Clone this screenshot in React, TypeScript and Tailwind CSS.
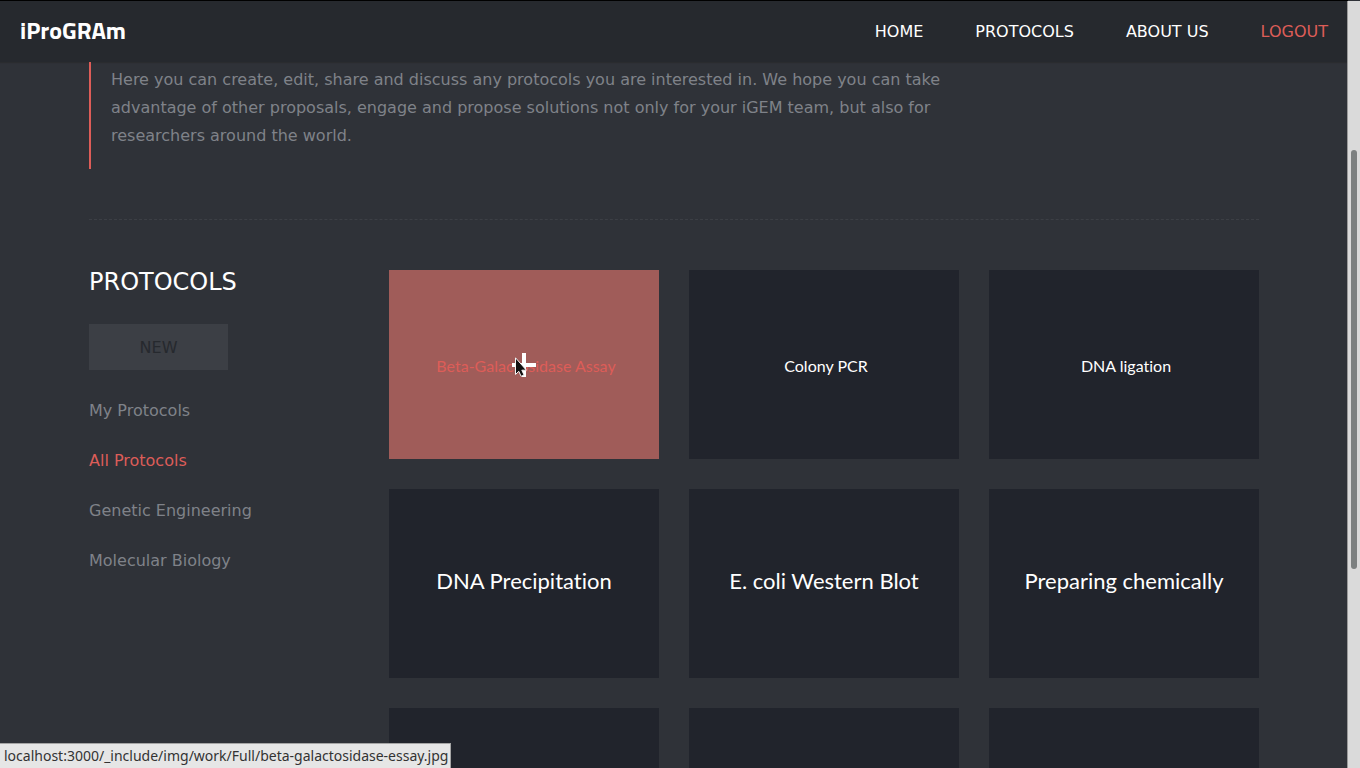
const navItems = ["Home", "Protocols", "About us"];

const filters = ["My Protocols", "All Protocols", "Genetic Engineering", "Molecular Biology"];

const protocols = [
  { title: "Beta-Galactosidase Assay", size: "small", active: true },
  { title: "Colony PCR", size: "small" },
  { title: "DNA ligation", size: "small" },
  { title: "DNA Precipitation", size: "large" },
  { title: "E. coli Western Blot", size: "large" },
  { title: "Preparing chemically", size: "large" },
  { title: "", size: "small" },
  { title: "", size: "small" },
  { title: "", size: "small" },
];

function Header() {
  return (
    <header className="flex h-[62px] shrink-0 items-center justify-between border-t border-black bg-[#26292e] px-5 shadow-[0_1px_1px_rgba(40,40,42,0.6)]">
      <a href="#home" className="pb-1 font-['Titillium_Web','Noto_Sans',sans-serif] text-2xl font-bold leading-7 text-white">
        iProGRAm
      </a>
      <nav className="flex gap-[52px] text-base uppercase">
        {navItems.map((item) => (
          <a key={item} href="#nav" className="text-white">
            {item}
          </a>
        ))}
        <a href="#logout" className="text-[#dd5d58]">
          Logout
        </a>
      </nav>
    </header>
  );
}

function Pointer() {
  return (
    <svg className="absolute left-[126px] top-[87px] h-5 w-3" viewBox="0 0 12 20" aria-hidden="true">
      <path d="M0.5 0.8v16.7l3.3-3.2 2.3 5 3-1.3-2.3-4.8h4.6z" fill="#111" stroke="#f4f4f4" strokeWidth="1" />
    </svg>
  );
}

function Tile({ title, size, active }: { title: string; size: string; active?: boolean }) {
  return (
    <a
      href="#protocol"
      aria-label={title || "Protocol"}
      className={`relative flex h-[189px] items-center justify-center font-['Lato',sans-serif] [font-variant-ligatures:none] ${
        active ? "bg-[#a05c59] text-[#dd5d58]" : "bg-[#21242c] text-white"
      } ${size === "large" ? "pb-1.5 text-[22px]" : "pl-1 pt-0.5 text-base"}`}
    >
      {title}
      {active && (
        <>
          <svg className="absolute left-[123px] top-[83px] size-6" viewBox="0 0 24 24" aria-hidden="true">
            <path d="M10 0h4v10h10v4H14v10h-4V14H0v-4h10z" fill="#fff" />
          </svg>
          <Pointer />
        </>
      )}
    </a>
  );
}

function Scrollbar() {
  return (
    <div className="absolute bottom-0 right-0 top-px w-[13px] border-l border-[#9a9a9a] bg-[#dadada] pl-[3px] pt-[149px]" aria-hidden="true">
      <div className="h-[419px] w-1.5 rounded-full bg-[#7c8080]" />
    </div>
  );
}

export default function App() {
  return (
    <div className="relative flex h-screen flex-col overflow-hidden bg-[#2f3238] font-['DejaVu_Sans',sans-serif] text-base text-[#7f8289]">
      <div className="flex min-h-0 flex-1 flex-col pr-3">
        <Header />
        <main className="mx-auto w-full max-w-[1170px]">
          <section className="border-b border-dashed border-[#3c3f45] pb-[50px]">
            <p className="max-w-[870px] border-l-2 border-[#dd5d58] pb-[19px] pl-5 pt-1 leading-7">
              Here you can create, edit, share and discuss any protocols you are interested in. We hope you can take
              advantage of other proposals, engage and propose solutions not only for your iGEM team, but also for
              researchers around the world.
            </p>
          </section>
          <div className="flex gap-[30px] pt-[50px]">
            <aside className="w-[270px] shrink-0">
              <h2 className="text-2xl leading-6 text-white">PROTOCOLS</h2>
              <button type="button" className="mt-[30px] block h-[46px] w-[139px] bg-[#3c3f45] pt-0.5 text-[#26292e]">
                NEW
              </button>
              <ul className="mt-[29px] flex flex-col gap-[26px]">
                {filters.map((filter) => (
                  <li key={filter}>
                    <a href="#filter" className={filter === "All Protocols" ? "text-[#dd5d58]" : ""}>
                      {filter}
                    </a>
                  </li>
                ))}
              </ul>
            </aside>
            <div className="grid flex-1 grid-cols-3 gap-[30px]">
              {protocols.map((protocol, index) => (
                <Tile key={index} {...protocol} />
              ))}
            </div>
          </div>
        </main>
      </div>
      <Scrollbar />
      <div className="absolute bottom-0 left-0 border-r border-t border-[#a5a5a5] bg-[#e6e6e6] pl-1 pr-0.5 font-['Noto_Sans',sans-serif] text-sm leading-6 text-[#333]">
        localhost:3000/_include/img/work/Full/beta-galactosidase-essay.jpg
      </div>
    </div>
  );
}
